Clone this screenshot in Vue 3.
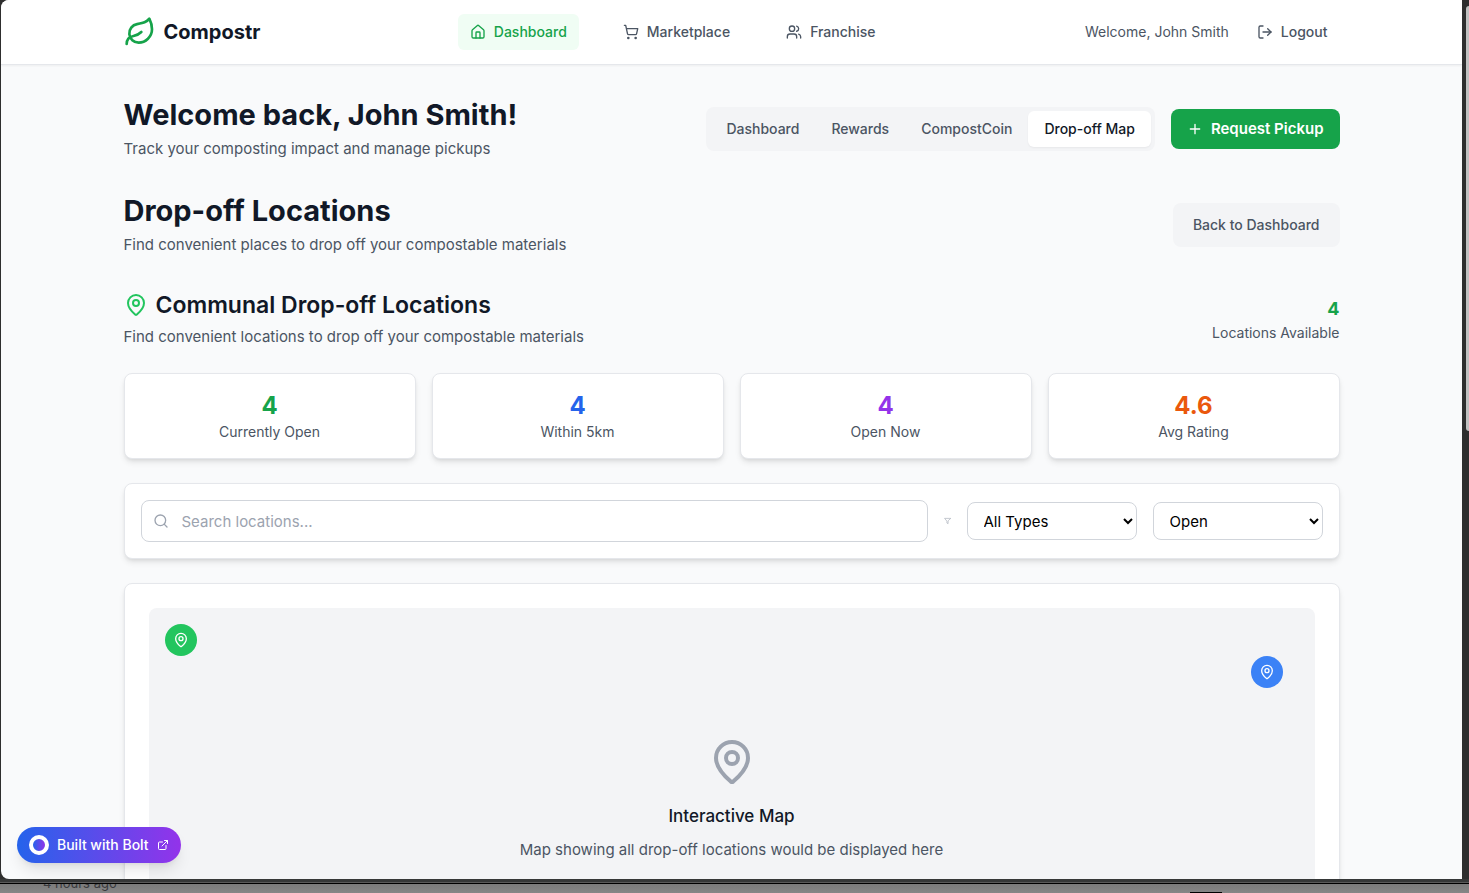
<script setup>
import { ref } from 'vue'

const icons = {
  leaf: [
    'M11 20A7 7 0 0 1 9.8 6.1C15.5 5 17 4.48 19 2c1 2 2 4.18 2 8 0 5.5-4.78 10-10 10Z',
    'M2 21c0-3 1.85-5.36 5.08-6C9.5 14.52 12 13 13 12',
  ],
  house: [
    'M15 21v-8a1 1 0 0 0-1-1h-4a1 1 0 0 0-1 1v8',
    'M3 10a2 2 0 0 1 .709-1.528l7-5.999a2 2 0 0 1 2.582 0l7 5.999A2 2 0 0 1 21 10v9a2 2 0 0 1-2 2H5a2 2 0 0 1-2-2z',
  ],
  cart: [
    'M9 21a1 1 0 1 1-2 0 1 1 0 0 1 2 0',
    'M20 21a1 1 0 1 1-2 0 1 1 0 0 1 2 0',
    'M2.05 2.05h2l2.66 12.42a2 2 0 0 0 2 1.58h9.78a2 2 0 0 0 1.95-1.57l1.65-7.43H5.12',
  ],
  users: [
    'M16 21v-2a4 4 0 0 0-4-4H6a4 4 0 0 0-4 4v2',
    'M13 7a4 4 0 1 1-8 0 4 4 0 0 1 8 0',
    'M22 21v-2a4 4 0 0 0-3-3.87',
    'M16 3.13a4 4 0 0 1 0 7.75',
  ],
}

const navItems = [
  { label: 'Dashboard', icon: 'house', active: true },
  { label: 'Marketplace', icon: 'cart', active: false },
  { label: 'Franchise', icon: 'users', active: false },
]

const tabs = ['Dashboard', 'Rewards', 'CompostCoin', 'Drop-off Map']
const activeTab = ref('Drop-off Map')

const stats = [
  { value: '4', label: 'Currently Open', tone: 'green' },
  { value: '4', label: 'Within 5km', tone: 'blue' },
  { value: '4', label: 'Open Now', tone: 'purple' },
  { value: '4.6', label: 'Avg Rating', tone: 'orange' },
]

const query = ref('')
const type = ref('All Types')
const status = ref('Open')
const pin = 'M20 10c0 4.993-5.539 10.193-7.399 11.799a1 1 0 0 1-1.202 0C9.539 20.193 4 14.993 4 10a8 8 0 0 1 16 0'
</script>

<template>
  <div class="desktop">
    <div class="window">
      <header class="topbar">
        <div class="container topbar-inner">
          <a href="#" class="brand">
            <svg class="icon icon-32" viewBox="0 0 24 24"><path v-for="d in icons.leaf" :key="d" :d="d" /></svg>
            <span>Compostr</span>
          </a>
          <nav class="nav">
            <a v-for="item in navItems" :key="item.label" href="#" class="nav-link" :class="{ active: item.active }">
              <svg class="icon icon-16" viewBox="0 0 24 24"><path v-for="d in icons[item.icon]" :key="d" :d="d" /></svg>
              <span>{{ item.label }}</span>
            </a>
          </nav>
          <div class="account">
            <span>Welcome, John Smith</span>
            <button type="button" class="nav-link">
              <svg class="icon icon-16" viewBox="0 0 24 24">
                <path d="M9 21H5a2 2 0 0 1-2-2V5a2 2 0 0 1 2-2h4" />
                <path d="m16 17 5-5-5-5" />
                <path d="M21 12H9" />
              </svg>
              <span>Logout</span>
            </button>
          </div>
        </div>
      </header>

      <main class="container main">
        <section class="row">
          <div>
            <h1>Welcome back, John Smith!</h1>
            <p>Track your composting impact and manage pickups</p>
          </div>
          <div class="actions">
            <div class="tabs">
              <button
                v-for="tab in tabs"
                :key="tab"
                type="button"
                class="tab"
                :class="{ active: tab === activeTab }"
                @click="activeTab = tab"
              >{{ tab }}</button>
            </div>
            <button type="button" class="primary">
              <svg class="icon icon-16" viewBox="0 0 24 24"><path d="M5 12h14M12 5v14" /></svg>
              <span>Request Pickup</span>
            </button>
          </div>
        </section>

        <section class="row">
          <div>
            <h1>Drop-off Locations</h1>
            <p>Find convenient places to drop off your compostable materials</p>
          </div>
          <div class="tabs">
            <button type="button" class="tab">Back to Dashboard</button>
          </div>
        </section>

        <section class="locations">
          <div class="row">
            <div>
              <h2>
                <svg class="icon icon-24" viewBox="0 0 24 24"><path :d="pin" /><circle cx="12" cy="10" r="3" /></svg>
                <span>Communal Drop-off Locations</span>
              </h2>
              <p>Find convenient locations to drop off your compostable materials</p>
            </div>
            <div class="available">
              <strong>4</strong>
              <span>Locations Available</span>
            </div>
          </div>

          <div class="stats">
            <div v-for="stat in stats" :key="stat.label" class="card stat">
              <strong :class="stat.tone">{{ stat.value }}</strong>
              <span>{{ stat.label }}</span>
            </div>
          </div>

          <div class="card filters">
            <div class="search">
              <svg class="icon icon-16" viewBox="0 0 24 24"><circle cx="11" cy="11" r="8" /><path d="m21 21-4.300-4.300" /></svg>
              <input v-model="query" type="text" placeholder="Search locations..." aria-label="Search locations" />
            </div>
            <svg class="icon funnel" viewBox="0 0 24 24"><path d="M22 3H2l8 9.460V19l4 2v-8.540z" /></svg>
            <select v-model="type" aria-label="Location type">
              <option>All Types</option>
            </select>
            <select v-model="status" aria-label="Status">
              <option>Open</option>
            </select>
          </div>

          <div class="card map-card">
            <div class="map">
              <button type="button" class="marker marker-green" aria-label="Drop-off location">
                <svg class="icon icon-16" viewBox="0 0 24 24"><path :d="pin" /><circle cx="12" cy="10" r="3" /></svg>
              </button>
              <button type="button" class="marker marker-blue" aria-label="Drop-off location">
                <svg class="icon icon-16" viewBox="0 0 24 24"><path :d="pin" /><circle cx="12" cy="10" r="3" /></svg>
              </button>
              <svg class="icon icon-48" viewBox="0 0 24 24"><path :d="pin" /><circle cx="12" cy="10" r="3" /></svg>
              <h3>Interactive Map</h3>
              <p>Map showing all drop-off locations would be displayed here</p>
            </div>
          </div>
        </section>
      </main>

      <a href="#" class="bolt">
        <span class="ring"></span>
        <span>Built with Bolt</span>
        <svg class="icon icon-12" viewBox="0 0 24 24">
          <path d="M15 3h6v6" />
          <path d="M10 14 21 3" />
          <path d="M18 13v6a2 2 0 0 1-2 2H5a2 2 0 0 1-2-2V8a2 2 0 0 1 2-2h6" />
        </svg>
      </a>
    </div>
    <span class="scroll-thumb"></span>
    <footer class="behind">
      <span>4 hours ago</span>
      <i></i>
    </footer>
  </div>
</template>

<style>
body {
  margin: 0;
  overflow: hidden;
}
</style>

<style scoped>
* {
  box-sizing: border-box;
}
.desktop {
  position: relative;
  display: flex;
  flex-direction: column;
  height: 100vh;
  overflow: hidden;
  background: #2e2e2e;
  font-family: Inter, "Liberation Sans", sans-serif;
  font-size: 15px;
  line-height: 24px;
  color: #4b5563;
}
.window {
  position: relative;
  flex: 1;
  min-height: 0;
  margin: 0 7px 0 1px;
  overflow: hidden;
  border-radius: 8px 0 0 8px;
  background: #f9fafb;
}
.container {
  max-width: 1280px;
  margin: 0 auto;
  padding: 0 32px;
}
h1, h2, h3, p {
  margin: 0;
}
button {
  border: 0;
  background: none;
  font: inherit;
  color: inherit;
  cursor: pointer;
}
a {
  color: inherit;
  text-decoration: none;
}
.icon {
  flex: none;
  fill: none;
  stroke: currentColor;
  stroke-width: 2;
  stroke-linecap: round;
  stroke-linejoin: round;
}
.icon-12 { width: 12px; height: 12px; }
.icon-16 { width: 16px; height: 16px; }
.icon-24 { width: 24px; height: 24px; }
.icon-32 { width: 32px; height: 32px; }
.icon-48 { width: 48px; height: 48px; }

.topbar {
  background: #fff;
  border-bottom: 1px solid #e5e7eb;
  box-shadow: 0 1px 2px rgba(0, 0, 0, 0.05);
}
.topbar-inner {
  display: flex;
  align-items: center;
  justify-content: space-between;
  height: 64px;
}
.brand {
  display: flex;
  align-items: center;
  gap: 8px;
  font-size: 20px;
  font-weight: 700;
  line-height: 28px;
  color: #111827;
}
.brand .icon {
  color: #16a34a;
}
.nav {
  display: flex;
  gap: 32px;
}
.nav-link {
  display: flex;
  align-items: center;
  gap: 8px;
  padding: 8px 12px;
  border-radius: 6px;
  font-size: 14px;
  font-weight: 500;
  line-height: 20px;
}
.nav-link.active {
  background: #f0fdf4;
  color: #16a34a;
}
.account {
  display: flex;
  align-items: center;
  gap: 16px;
  font-size: 14px;
  line-height: 20px;
}

.main {
  display: flex;
  flex-direction: column;
  gap: 32px;
  padding-top: 32px;
}
.row {
  display: flex;
  align-items: center;
  justify-content: space-between;
}
h1 {
  margin-bottom: 4px;
  font-size: 29px;
  font-weight: 700;
  line-height: 36px;
  color: #111827;
}
h2 {
  display: flex;
  align-items: center;
  gap: 8px;
  margin-bottom: 4px;
  font-size: 23px;
  font-weight: 600;
  line-height: 32px;
  color: #111827;
}
h2 .icon {
  color: #22c55e;
}
.actions {
  display: flex;
  align-items: center;
  gap: 16px;
}
.tabs {
  display: flex;
  padding: 4px;
  border-radius: 8px;
  background: #f3f4f6;
}
.tab {
  padding: 8px 16px;
  border-radius: 6px;
  font-size: 14px;
  font-weight: 500;
  line-height: 20px;
}
.tab.active {
  background: #fff;
  color: #111827;
  box-shadow: 0 1px 2px rgba(0, 0, 0, 0.05);
}
.primary {
  display: flex;
  align-items: center;
  gap: 8px;
  padding: 8px 16px;
  border-radius: 8px;
  background: #16a34a;
  color: #fff;
  font-weight: 600;
}

.locations {
  display: flex;
  flex-direction: column;
  gap: 24px;
}
.available {
  display: flex;
  flex-direction: column;
  align-items: flex-end;
  font-size: 14px;
  line-height: 20px;
}
.available strong {
  font-size: 18px;
  line-height: 28px;
  color: #16a34a;
}
.card {
  border: 1px solid #e5e7eb;
  border-radius: 8px;
  background: #fff;
  box-shadow: 0 4px 6px -1px rgba(0, 0, 0, 0.1), 0 2px 4px -2px rgba(0, 0, 0, 0.1);
}
.stats {
  display: grid;
  grid-template-columns: repeat(4, 1fr);
  gap: 16px;
}
.stat {
  display: flex;
  flex-direction: column;
  align-items: center;
  padding: 16px;
  font-size: 14px;
  line-height: 20px;
}
.stat strong {
  font-size: 24px;
  line-height: 32px;
}
.green { color: #16a34a; }
.blue { color: #2563eb; }
.purple { color: #9333ea; }
.orange { color: #ea580c; }

.filters {
  display: flex;
  align-items: center;
  gap: 16px;
  padding: 16px;
}
.search {
  position: relative;
  flex: 1;
}
.search .icon {
  position: absolute;
  top: 13px;
  left: 12px;
  color: #9ca3af;
}
.search input {
  display: block;
  width: 100%;
  height: 42px;
  padding: 8px 16px 8px 40px;
  border: 1px solid #d1d5db;
  border-radius: 8px;
  background: #fff;
  font: inherit;
  color: #111827;
}
.search input::placeholder {
  color: #9ca3af;
}
.funnel {
  width: 7px;
  height: 16px;
  color: #9ca3af;
}
select {
  width: 170px;
  height: 38px;
  padding: 0 0 0 12px;
  border: 1px solid #d1d5db;
  border-radius: 8px;
  background: #fff;
  font: inherit;
  color: #000;
}

.map-card {
  padding: 24px;
}
.map {
  position: relative;
  display: flex;
  flex-direction: column;
  align-items: center;
  justify-content: center;
  height: 384px;
  border-radius: 8px;
  background: #f3f4f6;
}
.icon-48 {
  margin-bottom: 16px;
  color: #9ca3af;
}
h3 {
  margin-bottom: 8px;
  font-size: 17px;
  font-weight: 500;
  line-height: 28px;
  color: #111827;
}
.marker {
  position: absolute;
  display: flex;
  align-items: center;
  justify-content: center;
  width: 32px;
  height: 32px;
  padding: 0;
  border-radius: 50%;
  color: #fff;
}
.marker-green {
  top: 16px;
  left: 16px;
  background: #22c55e;
}
.marker-blue {
  top: 48px;
  right: 32px;
  background: #3b82f6;
}

.bolt {
  position: absolute;
  bottom: 16px;
  left: 16px;
  display: flex;
  align-items: center;
  gap: 8px;
  padding: 8px 12px;
  border-radius: 18px;
  background: linear-gradient(to right, #2563eb, #9333ea);
  box-shadow: 0 10px 15px -3px rgba(0, 0, 0, 0.1), 0 4px 6px -4px rgba(0, 0, 0, 0.1);
  color: #fff;
  font-size: 14px;
  font-weight: 500;
  line-height: 20px;
}
.ring {
  width: 20px;
  height: 20px;
  border: 4px solid #fff;
  border-radius: 50%;
  background: linear-gradient(to right, #2563eb, #9333ea) padding-box;
}

.scroll-thumb {
  position: absolute;
  top: 6px;
  right: 0;
  width: 3px;
  height: 425px;
  border-radius: 3px 0 0 3px;
  background: #c1c1c1;
}
.behind {
  position: relative;
  flex: none;
  height: 14px;
  padding-left: 43px;
  overflow: hidden;
  border-top: 3px solid #363838;
  background: linear-gradient(#5a5a5a 1px, #000 1px, #000 2px, #7b7b7b 2px, #868686);
  font-size: 13px;
  line-height: 20px;
  color: #3a3b3e;
}
.behind span {
  position: absolute;
  bottom: 0;
  clip-path: inset(11px 0 0 0);
}
.behind i {
  position: absolute;
  right: 247px;
  bottom: 0;
  width: 32px;
  height: 1px;
  background: #000;
}
</style>
